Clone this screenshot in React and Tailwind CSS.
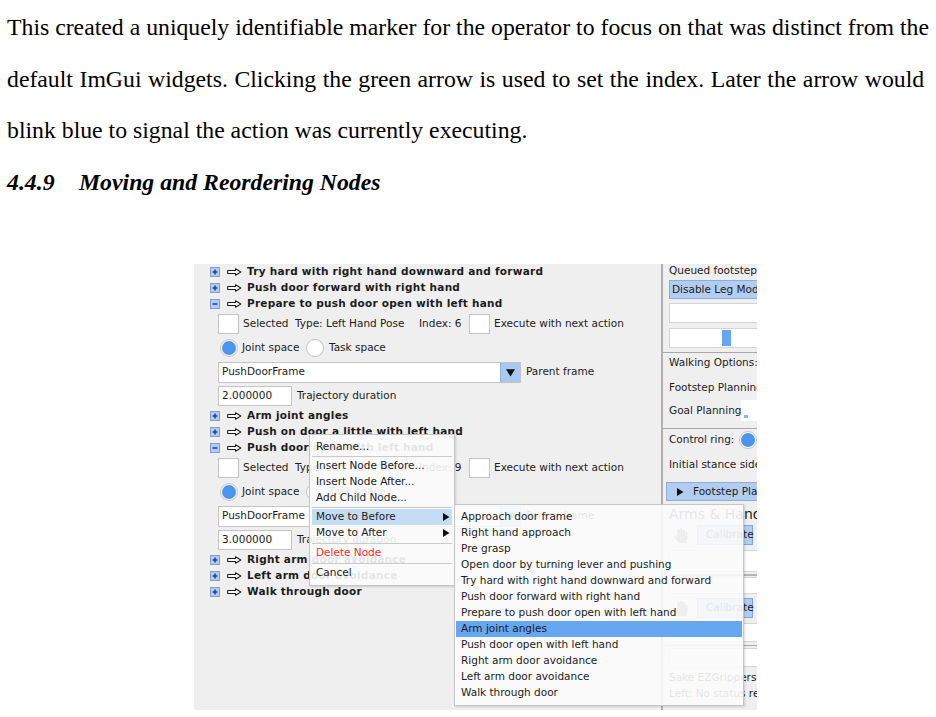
import React from "react";
import { FaHandPaper } from "react-icons/fa";

/* ---------- small drawn widgets ---------- */

const Toggle = ({ open }) => (
   <svg width="10" height="10" viewBox="0 0 10 10" className="shrink-0">
      <rect x="0.5" y="0.5" width="9" height="9" fill="#b3ccef" stroke="#7c9fd6" />
      <path d="M2.5 5 H7.5" stroke="#1d3a6e" strokeWidth="1.4" />
      {!open && <path d="M5 2.5 V7.5" stroke="#1d3a6e" strokeWidth="1.4" />}
   </svg>
);

const HollowArrow = () => (
   <svg width="15" height="8" viewBox="0 0 15 8" className="shrink-0">
      <path d="M0.7 2.5 H8.5 V0.8 L13.8 4 L8.5 7.2 V5.5 H0.7 Z" fill="#fff" stroke="#1c1c1c" strokeWidth="1.1" strokeLinejoin="round" />
   </svg>
);

const Tri = ({ down, size = 8, className = "" }) => (
   <svg width={size} height={size} viewBox="0 0 8 8" className={"shrink-0 " + className}>
      {down ? <path d="M0 1 H8 L4 7.5 Z" fill="currentColor" /> : <path d="M1 0 L7.5 4 L1 8 Z" fill="currentColor" />}
   </svg>
);

const Checkbox = () => <div className="w-[21px] h-[20px] bg-white border border-[#c4c4c4] shrink-0" />;

const Radio = ({ on }) =>
   on ? (
      <div className="w-[18px] h-[18px] rounded-full border border-[#c4c4c4] bg-white flex items-center justify-center shrink-0">
         <div className="w-[14px] h-[14px] rounded-full bg-[#4c95ef]" />
      </div>
   ) : (
      <div className="w-[18px] h-[18px] rounded-full border border-[#c4c4c4] bg-white shrink-0" />
   );

/* ---------- left panel rows ---------- */

const TreeRow = ({ open, label }) => (
   <div className="h-[16px] flex items-center pl-[16px]">
      <Toggle open={open} />
      <span className="ml-[7px]">
         <HollowArrow />
      </span>
      <span className="ml-[5px] font-bold tracking-[0.25px] whitespace-nowrap">{label}</span>
   </div>
);

const SelectedRow = ({ index }) => (
   <div className="h-[24px] flex items-center pl-[24px] whitespace-nowrap">
      <Checkbox />
      <span className="ml-[4px] w-[52px]">Selected</span>
      <span className="w-[124px]">Type: Left Hand Pose</span>
      <span className="w-[50px]">Index: {index}</span>
      <Checkbox />
      <span className="ml-[4px]">Execute with next action</span>
   </div>
);

const SpaceRow = () => (
   <div className="h-[24px] flex items-center pl-[26px] whitespace-nowrap">
      <Radio on />
      <span className="ml-[4px] w-[64px]">Joint space</span>
      <Radio />
      <span className="ml-[5px]">Task space</span>
   </div>
);

const FrameRow = () => (
   <div className="h-[24px] flex items-center pl-[24px] whitespace-nowrap">
      <div className="w-[303px] h-[21px] bg-white border border-[#c4c4c4] flex items-center">
         <span className="pl-[3px] flex-1">PushDoorFrame</span>
         <div className="w-[20px] h-full bg-[#a9c8f0] border-l border-[#8fb2e2] flex items-center justify-center">
            <Tri down size={9} className="text-[#111]" />
         </div>
      </div>
      <span className="ml-[5px]">Parent frame</span>
   </div>
);

const DurationRow = ({ value }) => (
   <div className="h-[24px] flex items-center pl-[24px] whitespace-nowrap">
      <div className="w-[74px] h-[20px] bg-white border border-[#c4c4c4] flex items-center pl-[3px]">{value}</div>
      <span className="ml-[5px]">Trajectory duration</span>
   </div>
);

/* ---------- right panel ---------- */

const BlueButton = ({ children, className = "" }) => (
   <div className={"h-[19px] bg-[#b2cdf0] border border-[#8badde] flex items-center whitespace-nowrap " + className}>{children}</div>
);

const Field = ({ h = 20 }) => (
   <div className="bg-white border border-[#d4d4d4] w-[120px]" style={{ height: h }} />
);

const CalibrateRow = () => (
   <div className="h-[20px] flex items-center">
      <FaHandPaper className="text-[#7d7d7d] w-[14px] h-[15px] ml-[5px]" />
      <div className="ml-[9px] w-[56px] h-[20px] bg-[#b2cdf0] border border-[#7fa6dc] flex items-center pl-[8px]">Calibrate</div>
   </div>
);

const RightPanel = () => (
   <div className="w-[94px] overflow-hidden pl-[6px] flex flex-col whitespace-nowrap">
      <div className="h-[13px] leading-[13px]">Queued footsteps</div>
      <BlueButton className="mt-[3px] w-[120px] pl-[2px]">Disable Leg Mode</BlueButton>
      <div className="mt-[4px]">
         <Field />
      </div>
      <div className="mt-[5px] w-[120px] h-[20px] bg-white border border-[#d4d4d4] flex items-center">
         <div className="ml-[52px] w-[9px] h-[16px] bg-[#67a6f2]" />
      </div>
      <div className="mt-[4px] -ml-[6px] w-[120px] h-px bg-[#a8a8a8]" />
      <div className="mt-[2px] h-[14px] leading-[14px]">Walking Options:</div>
      <div className="mt-[11px] h-[14px] leading-[14px]">Footstep Planning</div>
      <div className="mt-[6px] h-[21px] flex items-center">
         <span className="w-[80px]">Goal Planning</span>
         <div className="w-[30px] h-[21px] bg-white flex items-end pb-[3px] pl-[3px]">
            <div className="w-[4px] h-[3px] bg-[#8cb7ee]" />
         </div>
      </div>
      <div className="mt-[7px] -ml-[6px] w-[120px] h-px bg-[#a8a8a8]" />
      <div className="mt-[1px] h-[20px] flex items-center">
         <span className="w-[79px]">Control ring:</span>
         <Radio on />
      </div>
      <div className="mt-[7px] h-[14px] leading-[14px]">Initial stance side</div>
      <BlueButton className="mt-[11px] -ml-[3px] w-[120px] pl-[9px]">
         <Tri size={8} className="text-[#111]" />
         <span className="ml-[9px]">Footstep Planner</span>
      </BlueButton>
      <div className="mt-[5px] h-[16px] leading-[16px] text-[14px]">Arms &amp; Hands</div>
      <div className="mt-[3px]">
         <CalibrateRow />
      </div>
      <div className="mt-[5px]">
         <Field h={22} />
      </div>
      <div className="mt-[2px] -ml-[6px] w-[120px] h-[2px] border-y border-[#b4b4b4]" />
      <div className="mt-[1px]">
         <Field h={17} />
      </div>
      <div className="mt-[4px]">
         <CalibrateRow />
      </div>
      <div className="mt-[5px]">
         <Field h={19} />
      </div>
      <div className="mt-[3px] -ml-[6px] w-[120px] h-px bg-[#a8a8a8]" />
      <div className="mt-[2px]">
         <Field h={19} />
      </div>
      <div className="mt-[3px] h-[14px] leading-[14px]">Sake EZGrippers</div>
      <div className="mt-[2px] h-[14px] leading-[14px]">Left: No status received</div>
   </div>
);

/* ---------- popup menus ---------- */

const Sep = ({ h }) => (
   <div className="mx-[2px] flex items-center" style={{ height: h }}>
      <div className="w-full h-px bg-[#cacaca]" />
   </div>
);

const Item = ({ children, active, red, sub }) => (
   <div
      className={
         "h-[16px] mx-[2px] pl-[4px] pr-[2px] flex items-center justify-between whitespace-nowrap " +
         (active ? "bg-[#c5dcf5] " : "") +
         (red ? "text-[#ff2b2b]" : "")
      }>
      <span>{children}</span>
      {sub && <Tri size={8} className="text-[#111]" />}
   </div>
);

const NodeMenu = () => (
   <div className="absolute left-[115px] top-[170px] w-[146px] bg-[#fbfbfb]/[0.9] border border-[#c6c6c6] shadow-[1px_1px_2px_rgba(0,0,0,0.15)] pt-[4px] pb-[4px]">
      <Item>Rename...</Item>
      <Sep h={3} />
      <Item>Insert Node Before...</Item>
      <Item>Insert Node After...</Item>
      <Item>Add Child Node...</Item>
      <Sep h={3} />
      <Item active sub>
         Move to Before
      </Item>
      <Item sub>Move to After</Item>
      <Sep h={4} />
      <Item red>Delete Node</Item>
      <Sep h={4} />
      <Item>Cancel</Item>
   </div>
);

const ACTIONS = [
   "Approach door frame",
   "Right hand approach",
   "Pre grasp",
   "Open door by turning lever and pushing",
   "Try hard with right hand downward and forward",
   "Push door forward with right hand",
   "Prepare to push door open with left hand",
   "Arm joint angles",
   "Push door open with left hand",
   "Right arm door avoidance",
   "Left arm door avoidance",
   "Walk through door",
];

const TargetMenu = () => (
   <div className="absolute left-[260px] top-[240px] w-[290px] bg-[#fbfbfb]/[0.9] border border-[#c6c6c6] shadow-[1px_1px_2px_rgba(0,0,0,0.15)] pt-[4px] pb-[4px]">
      {ACTIONS.map((a) => (
         <div
            key={a}
            className={"h-[16px] mx-[1px] pl-[5px] flex items-center whitespace-nowrap " + (a === "Arm joint angles" ? "bg-[#67a7f2]" : "")}>
            {a}
         </div>
      ))}
   </div>
);

/* ---------- page ---------- */

export default function App() {
   return (
      <div className="w-[936px] h-[717px] bg-white overflow-hidden">
         <div className="h-[264px] pl-[7px] pt-[2px] font-['Liberation_Serif',serif] text-[23.75px] leading-[51.5px] text-black whitespace-nowrap overflow-hidden">
            <p>This created a uniquely identifiable marker for the operator to focus on that was distinct from the</p>
            <p className="[word-spacing:0.6px]">default ImGui widgets. Clicking the green arrow is used to set the index. Later the arrow would</p>
            <p>blink blue to signal the action was currently executing.</p>
            <p className="font-bold italic">
               <span className="inline-block w-[72px]">4.4.9</span>Moving and Reordering Nodes
            </p>
         </div>

         <div className="ml-[194px] w-[563px] h-[446px] relative overflow-hidden bg-[#efefef] flex font-['DejaVu_Sans',sans-serif] text-[10.5px] text-[#1c1c1c]">
            <div className="w-[467px] flex flex-col">
               <TreeRow label="Try hard with right hand downward and forward" />
               <TreeRow label="Push door forward with right hand" />
               <TreeRow open label="Prepare to push door open with left hand" />
               <SelectedRow index={6} />
               <SpaceRow />
               <FrameRow />
               <DurationRow value="2.000000" />
               <TreeRow label="Arm joint angles" />
               <TreeRow label="Push on door a little with left hand" />
               <TreeRow open label="Push door open with left hand" />
               <SelectedRow index={9} />
               <SpaceRow />
               <FrameRow />
               <DurationRow value="3.000000" />
               <TreeRow label="Right arm door avoidance" />
               <TreeRow label="Left arm door avoidance" />
               <TreeRow label="Walk through door" />
            </div>
            <div className="w-[2px] bg-[#b0b0b0]" />
            <RightPanel />

            <NodeMenu />
            <TargetMenu />
         </div>
      </div>
   );
}
